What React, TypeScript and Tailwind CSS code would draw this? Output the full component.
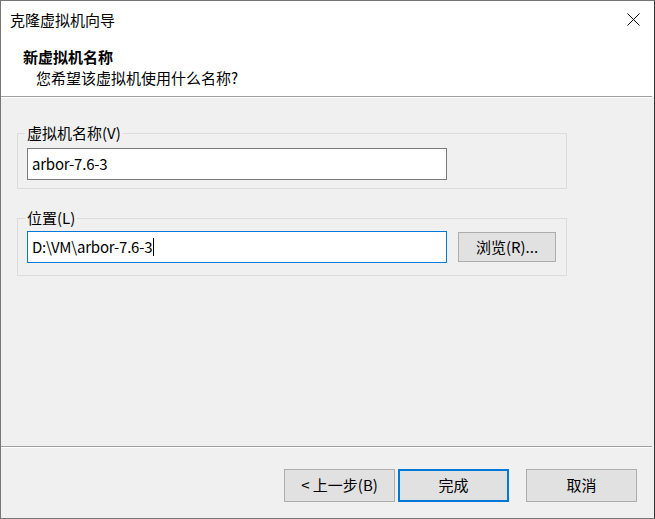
const font = 'font-["Segoe_UI","Noto_Sans_CJK_SC",sans-serif]';

const WizardButton = ({
  label,
  primary = false,
}: {
  label: string;
  primary?: boolean;
}) => (
  <button
    className={
      primary
        ? 'w-[111px] h-[33px] bg-[#e1e1e1] border-2 border-[#0078d7] text-[15px] text-black'
        : 'w-[111px] h-[33px] bg-[#e1e1e1] border border-[#adadad] text-[15px] text-black'
    }
  >
    {label}
  </button>
);

const App = () => {
  return (
    <div
      className={`${font} w-[655px] h-[519px] flex flex-col bg-[#f0f0f0] border border-[#767676] border-r-[#333333] text-black`}
    >
      {/* title bar + header */}
      <div className="h-[95px] bg-white flex flex-col">
        <div className="h-[37px] flex items-center justify-between pl-[9px] pr-[14px]">
          <span className="text-[15px] leading-[20px]">克隆虚拟机向导</span>
          <svg width="13" height="13" viewBox="0 0 13 13">
            <path d="M0.5 0.5 L12.5 12.5 M12.5 0.5 L0.5 12.5" stroke="#000" strokeWidth="1" />
          </svg>
        </div>
        <div className="mt-[9px] pl-[22px] text-[15px] leading-[20px] font-bold">新虚拟机名称</div>
        <div className="mt-[1px] pl-[35px] text-[15px] leading-[20px]">您希望该虚拟机使用什么名称?</div>
      </div>
      <div className="h-px bg-[#a0a0a0] mr-[2px]" />
      <div className="h-px bg-white mr-[2px]" />

      {/* body */}
      <div className="flex-1 pl-[16px]">
        <fieldset className="mt-[26px] w-[550px] border border-[#dcdcdc] pl-[9px] pt-[6px] pb-[8px]">
          <legend className="-ml-[2px] px-[2px] text-[15px] leading-[18px]">虚拟机名称(V)</legend>
          <div className="w-[420px] h-[32px] bg-white border border-[#7a7a7a] pl-[4px] flex items-center text-[15px] tracking-[-0.2px]">
            arbor-7.6-3
          </div>
        </fieldset>

        <fieldset className="mt-[20px] w-[550px] border border-[#dcdcdc] pl-[9px] pt-[4px] pb-[12px]">
          <legend className="-ml-[2px] px-[2px] text-[15px] leading-[18px]">位置(L)</legend>
          <div className="flex items-center">
            <div className="w-[420px] h-[32px] bg-white border border-[#0078d7] pl-[4px] flex items-center text-[15px] tracking-[-0.2px]">
              D:\VM\arbor-7.6-3
              <span className="inline-block w-px h-[18px] bg-black ml-px" />
            </div>
            <button className="ml-[11px] w-[98px] h-[30px] bg-[#e1e1e1] border border-[#adadad] text-[15px]">
              浏览(R)...
            </button>
          </div>
        </fieldset>
      </div>

      <div className="h-px bg-[#a0a0a0] mr-[2px]" />
      <div className="h-px bg-white mr-[2px]" />

      {/* footer buttons */}
      <div className="h-[70px] flex items-start justify-end pt-[21px] pr-[17px]">
        <WizardButton label="<  上一步(B)" />
        <div className="ml-[3px]">
          <WizardButton label="完成" primary />
        </div>
        <div className="ml-[17px]">
          <WizardButton label="取消" />
        </div>
      </div>
    </div>
  );
};

export default App;
